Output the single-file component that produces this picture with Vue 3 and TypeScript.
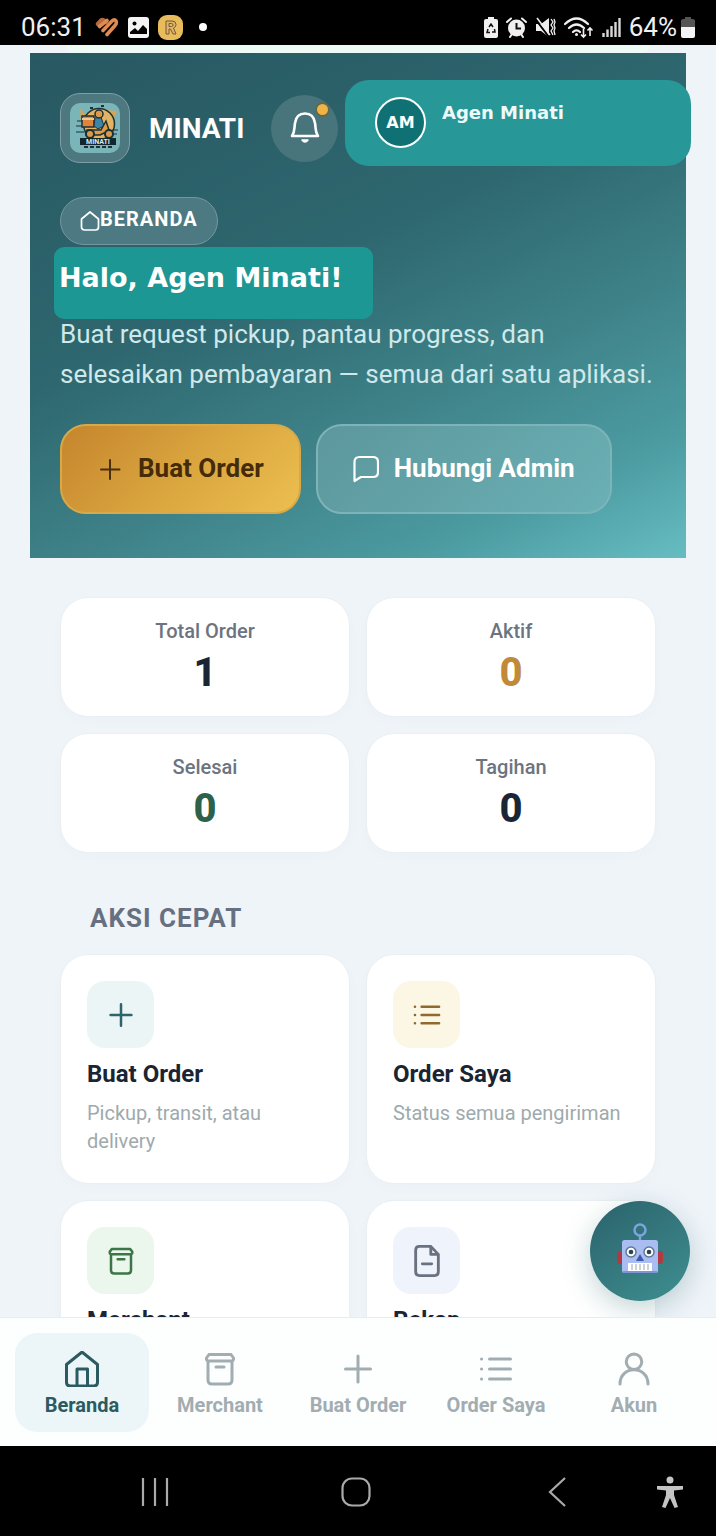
<script setup lang="ts">
interface Stat {
  label: string
  value: number
  tone: string
}

interface Action {
  title: string
  text: string
  icon: string
  tone: string
}

interface Tab {
  label: string
  icon: string
  active: boolean
}

const stats: Stat[] = [
  { label: 'Total Order', value: 1, tone: 'ink' },
  { label: 'Aktif', value: 0, tone: 'amber' },
  { label: 'Selesai', value: 0, tone: 'green' },
  { label: 'Tagihan', value: 0, tone: 'ink' },
]

const actions: Action[] = [
  { title: 'Buat Order', text: 'Pickup, transit, atau delivery', icon: 'plus', tone: 'teal' },
  { title: 'Order Saya', text: 'Status semua pengiriman', icon: 'list', tone: 'sand' },
  { title: 'Merchant', text: '', icon: 'store', tone: 'leaf' },
  { title: 'Rekap', text: '', icon: 'file', tone: 'slate' },
]

const tabs: Tab[] = [
  { label: 'Beranda', icon: 'home', active: true },
  { label: 'Merchant', icon: 'store', active: false },
  { label: 'Buat Order', icon: 'plus', active: false },
  { label: 'Order Saya', icon: 'list', active: false },
  { label: 'Akun', icon: 'user', active: false },
]

const paths: Record<string, string> = {
  plus: 'M18 5V31M5.500 18H30.500',
  list: 'M11.500 8H32.500M11.500 18H32.500M11.500 28H32.500M3.500 8H3.600M3.500 18H3.600M3.500 28H3.600',
  store: 'M7 3.500H29L31.500 7Q32 10 29 10H7Q4 10 4.500 7ZM6 10V29Q6 33 10 33H26Q30 33 30 29V10M14 16H22',
  file: 'M10 2.500H22L30 11V29.500Q30 33.500 26 33.500H10Q6 33.500 6 29.500V6.500Q6 2.500 10 2.500ZM22 2.500V11H30M13 21H23',
  home: 'M2.500 13.500L18 1L33.500 13.500V31Q33.500 35 29.500 35H6.500Q2.500 35 2.500 31ZM13 35V18H23.500V35',
  user: 'M18 3A7.500 7.500 0 0 1 18 18.500A7.500 7.500 0 0 1 18 3ZM4 33C4 14 32 14 32 33',
}
</script>

<template>
  <div class="phone">
    <header class="status">
      <div class="status-group">
        <span class="clock">06:31</span>
        <svg width="24" height="22" viewBox="0 0 24 22" aria-hidden="true">
          <path d="M3 8L6 4.500Q8 3 10.500 6" fill="none" stroke="#b96a3c" stroke-width="4.400" stroke-linecap="round" />
          <path d="M4.500 10.500L12 4.500M8 14.500L17 5Q19.500 2.500 21 5Q22 7 20 9.500L12 18.500" fill="none" stroke="#de8b54" stroke-width="3.600" stroke-linecap="round" stroke-linejoin="round" />
        </svg>
        <svg width="21" height="21" viewBox="0 0 21 21" aria-hidden="true">
          <rect width="21" height="21" rx="3" fill="#f4f4f4" />
          <circle cx="6.500" cy="6.500" r="2" fill="#000" />
          <path d="M2 17V15L7 11L10 14L15 8L19 12V17Z" fill="#000" />
        </svg>
        <svg width="25" height="25" viewBox="0 0 25 25" aria-hidden="true">
          <rect width="25" height="25" rx="9" fill="#e8bb5b" />
          <path d="M8 6H14Q18 6 18 9.500Q18 12 15.500 13L18 19H15L12.500 14H11V19H8ZM11 8.500V11.500H13.500Q15 11.500 15 10Q15 8.500 13.500 8.500Z" fill="#e0b568" stroke="#76573a" stroke-width="1" />
        </svg>
        <span class="dot"></span>
      </div>
      <div class="status-group right">
        <svg width="14" height="21" viewBox="0 0 14 21" aria-hidden="true">
          <path d="M4 0H10V2H12Q14 2 14 4V19Q14 21 12 21H2Q0 21 0 19V4Q0 2 2 2H4Z" fill="#f0f0f0" />
          <path d="M5 10L7 7L9 10M10.500 12L11 15H8M6 15.500H3L4 12" fill="none" stroke="#111" stroke-width="1.500" />
        </svg>
        <svg width="21" height="21" viewBox="0 0 21 21" aria-hidden="true">
          <circle cx="10.500" cy="11" r="8.500" fill="#f0f0f0" />
          <path d="M1 5L5 1.500M20 5L16 1.500M4 20L6 17M17 20L15 17" stroke="#f0f0f0" stroke-width="2" stroke-linecap="round" />
          <path d="M10.500 6V11.500H15" fill="none" stroke="#111" stroke-width="2" />
        </svg>
        <svg width="21" height="21" viewBox="0 0 21 21" aria-hidden="true">
          <path d="M1 7H6L14 1V20L6 14H1Z" fill="#f0f0f0" />
          <path d="M1 3L14 20" stroke="#000" stroke-width="2" />
          <path d="M2 1L15 18" stroke="#f0f0f0" stroke-width="1.500" />
          <path d="M16 2L18 5L16 8L18 11L16 14L18 18M19 2L20 5L19 8L20 11L19 14L20 18" fill="none" stroke="#f0f0f0" stroke-width="1.300" />
        </svg>
        <svg width="30" height="23" viewBox="0 0 30 23" aria-hidden="true">
          <path d="M1 8Q12.500 -3 24 8M5 12Q12.500 5 20 12M9 16Q12.500 12.500 16 16" fill="none" stroke="#f0f0f0" stroke-width="2.200" stroke-linecap="round" />
          <circle cx="12.500" cy="18.500" r="1.500" fill="#f0f0f0" />
          <path d="M19.500 13V21M17 18.500L19.500 21L22 18.500M26 20V12M23.500 14.500L26 12L28.500 14.500" fill="none" stroke="#f0f0f0" stroke-width="1.600" />
        </svg>
        <svg width="19" height="20" viewBox="0 0 19 20" aria-hidden="true">
          <path d="M1.500 20V16M5.500 20V12.500M9.500 20V9M13.500 20V5M17.500 20V1" stroke="#d8d8d8" stroke-width="2.400" />
        </svg>
        <span class="battery-text">64%</span>
        <svg width="14" height="21" viewBox="0 0 14 21" aria-hidden="true">
          <path d="M4 0H10V2H12Q14 2 14 4V11H0V4Q0 2 2 2H4Z" fill="#555" />
          <path d="M0 10H14V19Q14 21 12 21H2Q0 21 0 19Z" fill="#f4f4f4" />
        </svg>
      </div>
    </header>

    <main class="content">
      <div class="strip"></div>

      <section class="hero">
        <div class="topbar">
          <div class="brand">
            <span class="logo">
              <svg width="50" height="50" viewBox="0 0 50 50" aria-hidden="true">
                <rect width="50" height="50" rx="10" fill="#7ab5b9" />
                <path d="M10 5L16 12L11 18ZM38 7L47 8L43 18Z" fill="#d5a45b" />
                <circle cx="29" cy="21" r="15.500" fill="#e0b460" stroke="#1d3038" stroke-width="1.500" />
                <path d="M7 18H16M6 23H14M6 29H16M42 27H48M40 31H47" stroke="#1d3038" stroke-width="1" />
                <rect x="12" y="13" width="12" height="11" fill="#e0843c" stroke="#1d3038" stroke-width="1.500" />
                <path d="M12 16H24" stroke="#f3c784" stroke-width="2" />
                <path d="M25 15L31 14L34 23L28 26L24 23Z" fill="#3a86ab" stroke="#1d3038" />
                <circle cx="29" cy="11" r="4" fill="#e09b49" stroke="#1d3038" stroke-width="1.500" />
                <path d="M17 27H31L36 18L40 30H34L30 32H16Z" fill="#e39b44" stroke="#1d3038" stroke-width="1.500" />
                <circle cx="20" cy="31" r="4" fill="#d99b49" stroke="#1d3038" stroke-width="2" />
                <circle cx="39" cy="31" r="4" fill="#d99b49" stroke="#1d3038" stroke-width="2" />
                <rect x="10" y="35" width="36" height="7" fill="#13272f" />
                <path d="M14 44H43M20 5H23M31 3H34" stroke="#1d3038" stroke-width="2" stroke-dasharray="4 2" />
                <text x="28" y="41" class="logo-text">MINATI</text>
              </svg>
            </span>
            <strong class="brand-name">MINATI</strong>
            <button class="bell" type="button" aria-label="Notifikasi">
              <svg width="32" height="34" viewBox="0 0 32 34" aria-hidden="true">
                <path d="M3 25C6 21 5 18 6 12C7 5 11 2.500 16 2.500C21 2.500 25 5 26 12C27 18 26 21 29 25Z" fill="none" stroke="#fff" stroke-width="2.600" stroke-linejoin="round" />
                <path d="M13 29Q16 33 19 29Z" fill="#fff" stroke="#fff" stroke-width="1.500" stroke-linejoin="round" />
              </svg>
              <span class="bell-dot"></span>
            </button>
          </div>
          <button class="profile" type="button">
            <span class="avatar">AM</span>
            <span class="profile-name">Agen Minati</span>
          </button>
        </div>

        <div class="chip">
          <svg width="20" height="20" viewBox="0 0 20 20" aria-hidden="true">
            <path d="M1.500 8L10 1L18.500 8V16Q18.500 19 15.500 19H4.500Q1.500 19 1.500 16Z" fill="none" stroke="#fff" stroke-width="1.700" stroke-linejoin="round" />
          </svg>
          <span>BERANDA</span>
        </div>
        <h1 class="greeting">Halo, Agen Minati!</h1>
        <p class="lead">Buat request pickup, pantau progress, dan selesaikan pembayaran — semua dari satu aplikasi.</p>
        <div class="cta">
          <button class="btn gold" type="button">
            <svg width="26" height="26" viewBox="0 0 26 26" aria-hidden="true">
              <path d="M13 4V23M4 13.500H22.500" stroke="#4a2f0b" stroke-width="2" stroke-linecap="round" />
            </svg>
            <span>Buat Order</span>
          </button>
          <button class="btn glass" type="button">
            <svg width="26" height="28" viewBox="0 0 26 28" aria-hidden="true">
              <path d="M1.500 26V7Q1.500 2 6.500 2H20Q25 2 25 7V17Q25 22 20 22H8Z" fill="none" stroke="#fff" stroke-width="2.200" stroke-linejoin="round" />
            </svg>
            <span>Hubungi Admin</span>
          </button>
        </div>
      </section>

      <section class="grid stats">
        <article v-for="s in stats" :key="s.label" class="card stat">
          <span class="stat-label">{{ s.label }}</span>
          <strong class="stat-value" :class="s.tone">{{ s.value }}</strong>
        </article>
      </section>

      <h2 class="section-title">AKSI CEPAT</h2>
      <section class="grid">
        <a v-for="a in actions" :key="a.title" href="#" class="card action">
          <span class="tile" :class="a.tone">
            <svg viewBox="0 0 36 36" :class="a.icon" aria-hidden="true"><path :d="paths[a.icon]" /></svg>
          </span>
          <span class="action-title">{{ a.title }}</span>
          <span class="action-text">{{ a.text }}</span>
        </a>
      </section>

      <button class="fab" type="button" aria-label="Asisten">
        <svg width="48" height="56" viewBox="0 0 48 56" aria-hidden="true">
          <path d="M24 12V20" stroke="#7ba4dc" stroke-width="2.500" />
          <circle cx="24" cy="7" r="5.500" fill="none" stroke="#7ba4dc" stroke-width="2.500" />
          <rect x="1" y="28" width="8" height="13" rx="3" fill="#b03a42" />
          <rect x="39" y="28" width="8" height="13" rx="3" fill="#b03a42" />
          <rect x="6" y="17" width="36" height="33" rx="2.500" fill="#a9bdf2" />
          <path d="M7 49H41" stroke="#7d95d2" stroke-width="2" />
          <circle cx="15" cy="29" r="5" fill="#fff" stroke="#5e7891" stroke-width="1.500" />
          <circle cx="33" cy="29" r="5" fill="#fff" stroke="#5e7891" stroke-width="1.500" />
          <circle cx="15" cy="29" r="2.300" fill="#27435c" />
          <circle cx="33" cy="29" r="2.300" fill="#27435c" />
          <path d="M24 31L28 38H20Z" fill="#3d5bb0" />
          <rect x="12" y="40" width="24" height="8" fill="#fff" />
          <path d="M16 41V47M20 41V47M24 41V47M28 41V47M32 41V47" stroke="#9aa6b8" stroke-width="1" />
        </svg>
      </button>
    </main>

    <nav class="tabs">
      <a v-for="t in tabs" :key="t.label" href="#" class="tab" :class="{ active: t.active }">
        <svg viewBox="0 0 36 36" aria-hidden="true"><path :d="paths[t.icon]" /></svg>
        <span>{{ t.label }}</span>
      </a>
    </nav>

    <footer class="system">
      <button type="button" aria-label="Aplikasi terbaru" class="sys recent">
        <svg width="30" height="32" viewBox="0 0 30 32" aria-hidden="true">
          <path d="M3 2V30M15 2V30M27 2V30" stroke="#aaa" stroke-width="2.200" />
        </svg>
      </button>
      <button type="button" aria-label="Layar utama" class="sys main">
        <svg width="30" height="32" viewBox="0 0 30 32" aria-hidden="true">
          <rect x="1.500" y="2.500" width="27" height="27" rx="9.500" fill="none" stroke="#aaa" stroke-width="2.200" />
        </svg>
      </button>
      <button type="button" aria-label="Kembali" class="sys back">
        <svg width="30" height="32" viewBox="0 0 30 32" aria-hidden="true">
          <path d="M23 2L8 16L23 30" fill="none" stroke="#aaa" stroke-width="2.200" />
        </svg>
      </button>
      <button type="button" aria-label="Aksesibilitas" class="sys access">
        <svg width="26" height="32" viewBox="0 0 26 32" aria-hidden="true">
          <circle cx="13" cy="4" r="3.500" fill="#c4c4c4" />
          <path d="M0 10H26V13.500L17 14.500V19L21 31L17.500 32L13 22L8.500 32L5 31L9 19V14.500L0 13.500Z" fill="#c4c4c4" />
        </svg>
      </button>
    </footer>
  </div>
</template>

<style>
body {
  margin: 0;
  background: #eff4f9;
}
</style>

<style scoped>
.phone {
  display: flex;
  flex-direction: column;
  height: 100vh;
  background: #eff4f9;
  font-family: Roboto, "Liberation Sans", sans-serif;
  color: #1a2433;
}
.phone *,
.phone {
  box-sizing: border-box;
}
button {
  font-family: inherit;
  border: 0;
  padding: 0;
  background: none;
  color: inherit;
}
a {
  color: inherit;
  text-decoration: none;
}
svg {
  display: block;
  flex: none;
}
.status {
  display: flex;
  justify-content: space-between;
  align-items: center;
  height: 45px;
  flex: none;
  padding: 9px 21px 0 21px;
  background: #000;
  color: #f0f0f0;
  font-size: 26px;
  line-height: 36px;
}
.status-group {
  display: flex;
  align-items: center;
  gap: 9px;
}
.status-group.right {
  gap: 8px;
}
.battery-text {
  margin-right: -4px;
}
.dot {
  width: 8px;
  height: 8px;
  margin-left: 7px;
  border-radius: 50%;
  background: #fff;
}
.content {
  position: relative;
  flex: 1;
  min-height: 0;
  overflow: hidden;
  padding: 0 30px;
}
.strip {
  height: 8px;
  margin: 0 36px;
  border-radius: 0 0 12px 12px;
  background: #eefaf6;
}
.hero {
  padding: 27px 30px 44px;
  background: linear-gradient(155deg, #285862 0%, #2e676f 42%, #40858b 67%, #4b9ba1 84%, #66bdc1 100%);
  color: #fff;
}
.topbar {
  display: flex;
  margin-right: -35px;
  height: 86px;
}
.brand {
  display: flex;
  align-items: center;
  height: 70px;
  margin-top: 13px;
}
.logo {
  display: grid;
  place-items: center;
  width: 70px;
  height: 70px;
  border: 1px solid #7f9ea5;
  border-radius: 20px;
  background: #4d7880;
}
.logo-text {
  font: bold 7px Roboto, sans-serif;
  fill: #dfe9ea;
  text-anchor: middle;
}
.brand-name {
  width: 103px;
  margin: 0 0 0 19px;
  font-size: 28px;
  font-weight: 700;
}
.bell {
  position: relative;
  display: grid;
  place-items: center;
  width: 67px;
  height: 67px;
  margin: 0 7px 0 19px;
  border-radius: 50%;
  background: #48747c;
}
.bell-dot {
  position: absolute;
  top: 7px;
  right: 8px;
  width: 15px;
  height: 15px;
  border: 2px solid #5f6a4d;
  border-radius: 50%;
  background: #efb347;
}
.profile {
  display: flex;
  flex: 1;
  align-items: flex-start;
  padding: 17px 30px;
  gap: 16px;
  border-radius: 24px;
  background: #289797;
  font-family: "DejaVu Sans", sans-serif;
  font-weight: 700;
}
.avatar {
  width: 51px;
  height: 51px;
  border: 2px solid #fff;
  border-radius: 50%;
  background: #0f7173;
  font-size: 16px;
  line-height: 48px;
  text-align: center;
}
.profile-name {
  margin-top: 4px;
  font-size: 18px;
  line-height: 24px;
  color: #eefafa;
}
.chip {
  display: flex;
  align-items: center;
  width: fit-content;
  height: 48px;
  margin-top: 31px;
  padding: 0 19px;
  border: 1px solid #7596a0;
  border-radius: 24px;
  background: #4d7a82;
  font-size: 20px;
  font-weight: 700;
  letter-spacing: 1px;
  line-height: 42px;
}
.chip span {
  margin-bottom: 4px;
}
.greeting {
  width: fit-content;
  height: 72px;
  margin: 2px 0 -5px -6px;
  padding: 12px 31px 0 5px;
  border-radius: 10px;
  background: #1d9793;
  font-family: "DejaVu Sans", sans-serif;
  font-size: 27px;
  font-weight: 700;
  line-height: 37px;
}
.lead {
  position: relative;
  margin: 0 -8px 0 0;
  color: #cfe8ea;
  font-size: 26px;
  line-height: 40px;
}
.cta {
  display: flex;
  gap: 15px;
  margin-top: 30px;
}
.btn {
  display: flex;
  align-items: center;
  justify-content: center;
  gap: 15px;
  height: 90px;
  padding: 0 35px;
  border-radius: 26px;
  font-size: 26px;
  font-weight: 700;
  line-height: 36px;
}
.btn span {
  margin-bottom: 2px;
}
.gold {
  border: 2px solid #d9a847;
  background: linear-gradient(135deg, #c5852d, #d9a43e 50%, #ecbf50);
  color: #452b08;
}
.glass {
  border: 2px solid #7db4b9;
  background: linear-gradient(135deg, #5c979d, #6ab0b4);
  color: #fff;
}
.grid {
  display: grid;
  grid-template-columns: 1fr 1fr;
  gap: 16px;
  padding: 0 30px;
}
.stats {
  margin-top: 39px;
}
.card {
  display: flex;
  flex-direction: column;
  border: 1px solid #e9eff2;
  border-radius: 28px;
  background: #fff;
  box-shadow: 0 4px 12px rgba(40, 110, 100, 0.02);
}
.stat {
  align-items: center;
  padding: 19px 19px 17px;
}
.stat-label {
  color: #6b7480;
  font-size: 20px;
  font-weight: 500;
  line-height: 28px;
}
.stat-value {
  margin-top: 2px;
  font-size: 40px;
  font-weight: 800;
  line-height: 52px;
}
.ink {
  color: #1a2636;
}
.amber {
  color: #c08a38;
}
.green {
  color: #2d6149;
}
.section-title {
  margin: 45px 60px 16px;
  color: #667080;
  font-size: 26px;
  font-weight: 700;
  letter-spacing: 1px;
  line-height: 40px;
}
.action {
  min-height: 230px;
  padding: 26px 25px 27px 26px;
}
.tile {
  display: grid;
  place-items: center;
  width: 67px;
  height: 67px;
  border-radius: 18px;
}
.tile svg {
  width: 30px;
  height: 30px;
}
.tile svg path,
.tab svg path {
  fill: none;
  stroke: currentColor;
  stroke-width: 3;
  stroke-linecap: round;
  stroke-linejoin: round;
}
.tile svg.file {
  width: 34px;
  height: 34px;
}
.teal {
  background: #ebf5f5;
  color: #2d656d;
}
.sand {
  background: #fcf6e5;
  color: #8f6a30;
}
.leaf {
  background: #ebf6ec;
  color: #3b7548;
}
.slate {
  background: #eff3fb;
  color: #6a7180;
}
.action-title {
  margin-top: 10px;
  font-size: 24px;
  font-weight: 700;
  line-height: 32px;
}
.action-text {
  margin-top: 9px;
  color: #9eaaad;
  font-size: 20px;
  line-height: 28px;
}
.fab {
  position: absolute;
  right: 26px;
  bottom: 16px;
  display: grid;
  place-items: center;
  width: 100px;
  height: 100px;
  border-radius: 50%;
  background: linear-gradient(145deg, #2b626b, #3e8f91);
  box-shadow: 0 8px 28px rgba(40, 100, 105, 0.28);
}
.tabs {
  display: grid;
  grid-template-columns: repeat(5, 1fr);
  gap: 4px;
  flex: none;
  padding: 15px 15px 14px;
  border-top: 1px solid #e6edf0;
  background: #fdfefe;
}
.tab {
  display: flex;
  flex-direction: column;
  align-items: center;
  height: 99px;
  padding-top: 18px;
  border-radius: 22px;
  color: #a2adb1;
  font-size: 20px;
  font-weight: 700;
  line-height: 28px;
}
.tab svg {
  width: 36px;
  height: 36px;
  margin-bottom: 4px;
}
.tab.active {
  background: #ecf6f8;
  color: #2c5a61;
}
.system {
  display: grid;
  grid-template-columns: 255fr 201fr 201fr 59fr;
  flex: none;
  height: 90px;
  padding-top: 2px;
  background: #000;
}
.sys {
  display: flex;
  align-items: center;
}
.recent {
  justify-content: flex-end;
  padding-right: 85px;
}
.main {
  justify-content: center;
}
.back {
  justify-content: center;
}
.access {
  justify-content: flex-start;
}
</style>
